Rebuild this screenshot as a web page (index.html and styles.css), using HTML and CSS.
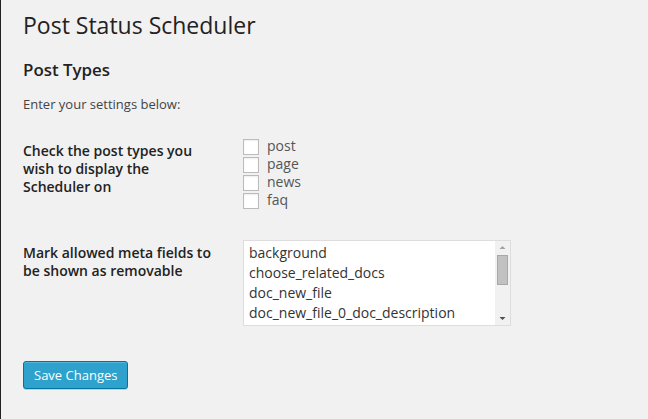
FILE: index.html
```html
<!DOCTYPE html>
<html>
<head>
<meta charset="utf-8">
<link rel="stylesheet" href="styles.css">
</head>
<body>
<div class="wrap">
  <h2 class="page-title">Post Status Scheduler</h2>
  <h3 class="section-title">Post Types</h3>
  <p class="intro">Enter your settings below:</p>
  <div class="form-table">
    <div class="row">
      <div class="th">Check the post types you wish to display the Scheduler on</div>
      <div class="td">
        <label class="check"><span class="box"></span><span>post</span></label>
        <label class="check"><span class="box"></span><span>page</span></label>
        <label class="check"><span class="box"></span><span>news</span></label>
        <label class="check"><span class="box"></span><span>faq</span></label>
      </div>
    </div>
    <div class="row">
      <div class="th">Mark allowed meta fields to be shown as removable</div>
      <div class="td">
        <div class="multiselect">
          <div class="options">
            <div class="option">background</div>
            <div class="option">choose_related_docs</div>
            <div class="option">doc_new_file</div>
            <div class="option">doc_new_file_0_doc_description</div>
          </div>
          <div class="scrollbar">
            <svg class="arrow" width="15" height="12" viewBox="0 0 15 12"><polygon points="4.5,8 10.5,8 7.5,5" fill="#a3a3a3"/></svg>
            <div class="thumb"></div>
            <div class="track-rest"></div>
            <svg class="arrow" width="15" height="12" viewBox="0 0 15 12"><polygon points="4.5,4 10.5,4 7.5,7" fill="#505050"/></svg>
          </div>
        </div>
      </div>
    </div>
  </div>
  <div class="submit"><button class="button-primary">Save Changes</button></div>
</div>
</body>
</html>
```
FILE: styles.css
```css
html, body {
  margin: 0;
  padding: 0;
}
body {
  background: #f1f1f1;
  border-left: 1px solid #222;
  min-height: 419px;
  box-sizing: border-box;
  font-family: "Open Sans", "Liberation Sans", sans-serif;
  color: #444;
  font-size: 13px;
}
.wrap {
  padding-left: 22px;
}
.page-title {
  margin: 0;
  padding-top: 11px;
  font-size: 23px;
  line-height: 29px;
  font-weight: 400;
  color: #222;
}
.section-title {
  margin: 19px 0 0;
  font-size: 16.9px;
  line-height: 22px;
  font-weight: 600;
  color: #222;
}
.intro {
  margin: 13px 0 0;
  font-size: 13px;
  line-height: 20px;
}
.form-table {
  margin-top: 8px;
  display: flex;
  flex-direction: column;
}
.row {
  display: flex;
  align-items: flex-start;
}
.th {
  width: 193px;
  flex: none;
  padding: 20px 17px 20px 0;
  font-size: 14px;
  line-height: 18.2px;
  font-weight: 600;
  color: #222;
}
.td {
  padding: 15px 10px;
  font-size: 14px;
}
.check {
  display: flex;
  align-items: flex-start;
  height: 18px;
  line-height: 18px;
  color: #555;
}
.box {
  width: 14px;
  height: 14px;
  margin: 2px 8px 0 0;
  border: 1px solid #bbb;
  background: #fff;
  box-shadow: inset 0 1px 2px rgba(0,0,0,.07);
  flex: none;
}
.multiselect {
  margin-top: 1px;
  width: 266px;
  height: 84px;
  border: 1px solid #ddd;
  background: #fff;
  display: flex;
  overflow: hidden;
}
.options {
  flex: 1;
  padding: 2px 0 0 5px;
  overflow: hidden;
}
.option {
  line-height: 20px;
  font-size: 14px;
  color: #333;
  white-space: nowrap;
}
.scrollbar {
  width: 15px;
  flex: none;
  background: #f1f1f1;
  display: flex;
  flex-direction: column;
  align-items: center;
}
.arrow {
  display: block;
  flex: none;
}
.thumb {
  margin-top: 2px;
  width: 9px;
  height: 28px;
  background: #c1c1c1;
  border: 1px solid #a8a8a8;
  flex: none;
}
.track-rest {
  flex: 1;
}
.submit {
  margin-top: 20px;
}
.button-primary {
  height: 28px;
  padding: 0 10px 1px;
  margin: 0;
  font-family: "Open Sans", "Liberation Sans", sans-serif;
  font-size: 13px;
  line-height: 26px;
  color: #fff;
  background: #2ea2cc;
  border: 1px solid #0074a2;
  border-radius: 3px;
  box-shadow: inset 0 1px 0 rgba(120,200,230,.5), 0 1px 0 rgba(0,0,0,.15);
  cursor: pointer;
}
```
